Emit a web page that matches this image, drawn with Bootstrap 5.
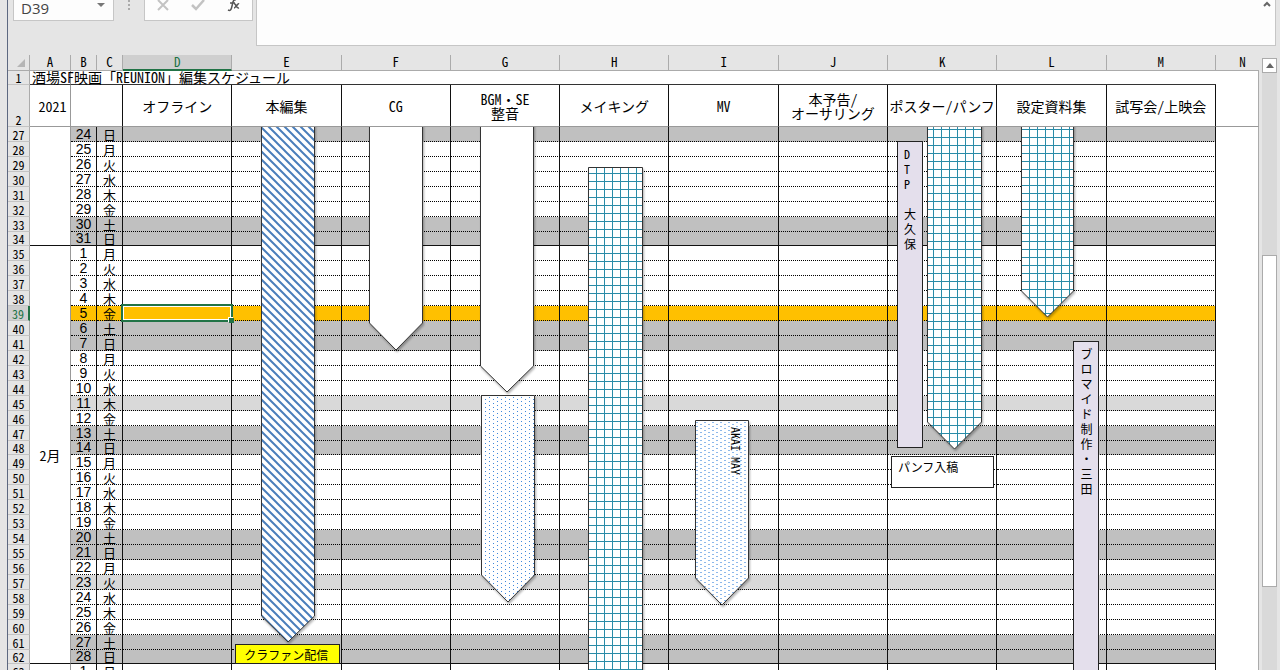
<!DOCTYPE html>
<html lang="ja">
<head>
<meta charset="utf-8">
<meta name="viewport" content="width=device-width, initial-scale=1">
<title>編集スケジュール</title>
<link href="https://cdn.jsdelivr.net/npm/bootstrap@5.3.0/dist/css/bootstrap.min.css" rel="stylesheet">
<style>
  :root { --chrome: #e5e5e5; --rule: #ababab; --excel: #217346; }
  body { background: var(--chrome); font-family: "Noto Sans CJK JP", sans-serif; font-size: 14px; color: #000; }
  .app { border-left: 1px solid #5d6880; margin-left: 7px; }

  .formula-bar { height: 55px; }
  .fx-box { background: #fdfdfd; border: 1px solid #c6c6c6; border-top: 0; height: 21px; }
  .name-box { width: 101px; margin-left: 5px; }
  .name-box input { font: 15px/16px "Open Sans", sans-serif; color: #444; width: 70px; padding: 0 0 0 7px; height: 16px; }
  .name-box button, .fx-tools button { height: 14px; line-height: 1; }
  .fx-tools { width: 109px; margin-left: 13px; }
  .grip { width: 3px; margin-left: 14px; }
  .formula { height: 46px; margin: 0 4px 0 3px; }
  .formula textarea { resize: none; height: 40px; }

  .sheet-table { table-layout: fixed; width: 100%; border-collapse: separate; border-spacing: 0; background: #fff; }
  .sheet-table th, .sheet-table td { padding: 0; font-weight: 400; text-align: center; vertical-align: middle; line-height: 14px; white-space: nowrap; }
  .c-num { width: 22px; } .c-a { width: 41px; } .c-day { width: 26px; } .c-n { width: 43px; }

  .half, .sheet-table .letters th, .sheet-table .rownum, .heads .frozen, .day .month { font-feature-settings: "hwid"; }
  .half { line-height: 0; }

  .sheet-table .letters th { height: 16px; background: var(--chrome); border-bottom: 1px solid var(--rule); border-right: 1px solid var(--rule); font-size: 13px; line-height: 14px; vertical-align: top; }
  .sheet-table .letters .picked { background: #cfcfcf; color: var(--excel); border-bottom: 2px solid var(--excel); }
  .sheet-table .letters th:last-child { padding-left: 10px; }
  .sheet-table .rownum { background: var(--chrome); border-right: 1px solid var(--rule); border-bottom: 1px solid #c4c4c4; font-size: 12px; line-height: 12px; vertical-align: bottom; }
  .sheet-table .rownum.picked { background: #cfcfcf; color: var(--excel); border-right: 2px solid var(--excel); }

  .sheet-table .title-row td { height: 14px; border-bottom: 1px solid #333; line-height: 13px; }
  .sheet-table .title-row .title-cell { text-align: left; padding-left: 2px; border-right: 1px solid #999; }
  .title-cell span { position: relative; }
  .heads th { height: 42px; border-right: 1px solid #111; border-bottom: 1px solid #999; }
  .heads .frozen { border-right-color: #999; }
  .sheet-table .heads .frozen { padding-left: 5px; }
  .heads .none { border-right: 0; }
  .sheet-table .title-row .blank { border: 0; border-right: 1px solid var(--rule); }
  .heads .blank { border-right-color: var(--rule); }

  .day td { height: 15px; border-bottom: 1px dotted #000; border-right: 1px solid #111; }
  .sheet-table .day.snug td { height: 14px; line-height: 13px; }
  .day.last td { border-bottom: 1px solid #111; }
  .day .month { border-right: 1px solid #999; border-bottom: 1px solid #111; background: #fff; }
  .day .date { font-family: "Liberation Sans", sans-serif; }
  .day .weekday { font-size: 13px; line-height: 13px; }
  .weekend td { background: #c0c0c0; } .holiday td { background: #d9d9d9; } .today td { background: #ffc000; }
  .day td.blank { background: #fff; border: 0; border-right: 1px solid var(--rule); }
  .active-cell { position: relative; }
  .active-cell i { position: absolute; inset: -2px; border: 2px solid var(--excel); box-shadow: inset 0 0 0 1px #fff; }
  .active-cell i::after { content: ""; position: absolute; right: -3px; bottom: -3px; width: 5px; height: 5px; background: var(--excel); box-shadow: -1px -1px 0 #fff; }

  /* drawing layer above the day rows; one track per task column */
  .shapes { position: absolute; top: 72px; bottom: 0; left: 115px; right: 43px; display: grid; grid-template-columns: repeat(10, 1fr); overflow: hidden; pointer-events: none; }
  .shapes > div { position: relative; }
  .shapes svg, .note { position: absolute; }
  .shapes svg { overflow: visible; filter: drop-shadow(1px 2px 1px rgba(0,0,0,.3)); }
  .shapes .outline { stroke: #333; stroke-width: 1; }
  .note { border: 1px solid #222; font-size: 12px; line-height: 15px; }
  .lilac { background: #e4dfec; width: 26px; padding: 4px 0 0 6px; }
  .akai { position: absolute; writing-mode: vertical-rl; font-size: 12px; line-height: 12px; }

  .scroll-col { width: 21px; padding: 3px 3px 0; }
  .scroll-col button { height: 15px; border: 1px solid var(--rule); background: #fff; }
  .track { background: #d9d9d9; }
  .thumb { margin-top: 182px; height: 332px; background: #fff; border: 1px solid var(--rule); }
</style>
</head>
<body class="overflow-hidden">
<div class="app vh-100 d-flex flex-column overflow-hidden">
  <header class="formula-bar d-flex align-items-start flex-shrink-0">
    <div class="fx-box name-box d-flex align-items-start">
      <input class="border-0 bg-transparent" type="text" value="D39" aria-label="名前ボックス">
      <button class="border-0 bg-transparent p-0 ms-auto me-2 d-flex align-items-start" aria-label="名前の一覧"><svg width="9" height="8"><path d="M1 3h8L5 7z" fill="#777"/></svg></button>
    </div>
    <svg class="grip" height="12" viewBox="0 0 3 12"><path d="M0 0h2v2H0zM0 4h2v2H0zM0 8h2v2H0z" fill="#aaa"/></svg>
    <div class="fx-box fx-tools d-flex justify-content-around">
      <button class="border-0 bg-transparent p-0 d-flex" aria-label="キャンセル"><svg width="14" height="12"><path d="M2 0l10 10M12 0L2 10" stroke="#c3c3c3" stroke-width="2"/></svg></button>
      <button class="border-0 bg-transparent p-0 d-flex" aria-label="入力"><svg width="14" height="12"><path d="M1 5l4 4L13 0" fill="none" stroke="#c3c3c3" stroke-width="2.500"/></svg></button>
      <button class="border-0 bg-transparent p-0 d-flex" aria-label="関数の挿入"><svg width="14" height="14"><path d="M9 0C7 -1 6 1 5.500 4L4.500 8C4 10 3 11 1 10M3 3h5M7 4c2-1 2 5 5 4M12 4c-1-1-4 4-5 4" fill="none" stroke="#555" stroke-width="1.500"/></svg></button>
    </div>
    <div class="fx-box formula flex-fill d-flex">
      <textarea class="border-0 bg-transparent flex-fill" aria-label="数式バー"></textarea>
      <button class="border-0 bg-transparent p-0 me-1 d-flex align-items-start" aria-label="数式バーの折りたたみ"><svg width="8" height="9"><path d="M1 6l3-3 3 3" fill="none" stroke="#666" stroke-width="2"/></svg></button>
    </div>
  </header>

  <main class="d-flex flex-fill overflow-hidden">
    <div class="flex-fill position-relative overflow-hidden">
      <table class="sheet-table">
        <colgroup><col class="c-num"><col class="c-a"><col class="c-day"><col class="c-day"><col><col><col><col><col><col><col><col><col><col><col class="c-n"></colgroup>
        <thead>
          <tr class="letters">
            <th><svg class="d-block ms-auto me-1 mt-1" width="8" height="8"><path d="M8 0v8H0z" fill="#b5b5b5"/></svg></th>
            <th>A</th><th>B</th><th>C</th><th class="picked">D</th><th>E</th><th>F</th><th>G</th><th>H</th><th>I</th><th>J</th><th>K</th><th>L</th><th>M</th><th class="border-end-0">N</th>
          </tr>
          <tr class="title-row">
            <th class="rownum">1</th>
            <td class="title-cell"><span>酒場<span class="half">SF</span>映画「<span class="half">REUNION</span>」編集スケジュール</span></td>
            <td colspan="12"></td><td class="blank"></td>
          </tr>
          <tr class="heads">
            <th class="rownum">2</th><th class="frozen">2021</th><th class="none"></th><th></th>
            <th>オフライン</th><th>本編集</th><th><span class="half">CG</span></th><th><span class="half">BGM</span>・<span class="half">SE</span><br>整音</th><th>メイキング</th><th><span class="half">MV</span></th><th>本予告<span class="half">/</span><br>オーサリング</th><th>ポスター<span class="half">/</span>パンフ</th><th>設定資料集</th><th>試写会<span class="half">/</span>上映会</th><th class="blank"></th>
          </tr>
        </thead>
        <tbody id="days"></tbody>
      </table>

      <div class="shapes">
        <div></div>
        <div>
          <svg style="left:29px;top:0" width="54" height="516"><defs><pattern id="stripe" width="8" height="8" patternUnits="userSpaceOnUse"><rect width="8" height="8" fill="#fff"/><path d="M-2 -2L10 10M-2 6L2 10M6 -2L10 2" stroke="#4a7ebb" stroke-width="2"/></pattern></defs><path class="outline" fill="url(#stripe)" d="M.5 -4H53.500V489L27 515L.5 489z"/></svg>
          <div class="note" style="left:3px;top:517px;width:105px;height:20px;padding-left:8px;background:#ff0;line-height:20px">クラファン配信</div>
        </div>
        <div><svg style="left:27px;top:0" width="54" height="224"><path class="outline" fill="#fff" d="M.5 -4H53.500V196L27 223L.5 196z"/></svg></div>
        <div>
          <svg style="left:29px;top:0" width="54" height="266"><path class="outline" fill="#fff" d="M.5 -4H53.500V239L27 265L.5 239z"/></svg>
          <svg style="left:30px;top:268px" width="54" height="208"><defs><pattern id="dots" width="8" height="4" patternUnits="userSpaceOnUse"><rect width="8" height="4" fill="#fff"/><path d="M4 0h1v1h-1zM0 2h1v1h-1z" fill="#3f88dc"/></pattern></defs><path class="outline" fill="url(#dots)" d="M.5 .5H53.500V180L27 207L.5 180z"/></svg>
        </div>
        <div><svg style="left:28px;top:40px" width="55" height="600"><defs><pattern id="gridH" width="8" height="8" y="6" patternUnits="userSpaceOnUse"><rect width="8" height="8" fill="#fff"/><path d="M0 .5H8M.5 0V8" stroke="#2a8ca8"/></pattern></defs><path class="outline" fill="url(#gridH)" d="M.5 .5H54.500V620H.5z"/></svg></div>
        <div>
          <svg style="left:25px;top:293px" width="54" height="186"><defs><pattern id="dashes" width="8" height="4" patternUnits="userSpaceOnUse"><rect width="8" height="4" fill="#fff"/><path d="M5 0h2v1h-2zM1 2h2v1h-2z" fill="#8db8ea"/></pattern></defs><path class="outline" fill="url(#dashes)" d="M.5 .5H53.500V158L27 185L.5 158z"/></svg>
          <div class="akai half" style="left:60px;top:300px;line-height:12px">AKAI MAY</div>
        </div>
        <div></div>
        <div>
          <div class="note lilac" style="left:9px;top:14px;height:307px"><span class="half">D<br>T<br>P</span><br><br>大<br>久<br>保</div>
          <svg style="left:39px;top:0" width="55" height="323"><defs><pattern id="gridK" width="8" height="8" x="6" y="2" patternUnits="userSpaceOnUse"><rect width="8" height="8" fill="#fff"/><path d="M0 .5H8M.5 0V8" stroke="#2a8ca8"/></pattern></defs><path class="outline" fill="url(#gridK)" d="M.5 -4H54.500V295L27.500 322L.5 295z"/></svg>
          <div class="note bg-white" style="left:3px;top:329px;width:103px;height:32px;padding:2px 6px">パンフ入稿</div>
        </div>
        <div>
          <svg style="left:24px;top:0" width="53" height="191"><defs><pattern id="gridL" width="8" height="8" y="2" patternUnits="userSpaceOnUse"><rect width="8" height="8" fill="#fff"/><path d="M0 .5H8M.5 0V8" stroke="#2a8ca8"/></pattern></defs><path class="outline" fill="url(#gridL)" d="M.5 -4H52.500V164L26.500 190L.5 164z"/></svg>
          <div class="note lilac" style="left:76px;top:214px;height:600px">ブ<br>ロ<br>マ<br>イ<br>ド<br>制<br>作<br>・<br>三<br>田</div>
        </div>
        <div></div>
      </div>
    </div>

    <div class="scroll-col d-flex flex-column flex-shrink-0">
      <button class="p-0 d-flex align-items-center justify-content-center" aria-label="上へスクロール"><svg width="8" height="5"><path d="M4 0l4 5H0z" fill="#666"/></svg></button>
      <div class="track flex-fill"><div class="thumb"></div></div>
    </div>
  </main>
</div>

<script>
  // January 24 (row 27, Sunday) onward
  const week = "日月火水木金土";
  const holidays = ["2-11", "2-23"], today = "2-5";
  const monthRows = { 27: ["", 8], 35: ["2月", 28], 63: ["", 1] };
  const snug = [34, 48, 62], monthEnds = [34, 62];
  const first = new Date(2021, 0, 24);
  let html = "";
  for (let r = 27; r < 64; r++) {
    const d = new Date(first.getFullYear(), 0, first.getDate() + r - 27);
    const key = (d.getMonth() + 1) + "-" + d.getDate(), w = d.getDay();
    const cls = ["day"];
    if (key === today) cls.push("today");
    else if (w === 0 || w === 6) cls.push("weekend");
    else if (holidays.includes(key)) cls.push("holiday");
    if (snug.includes(r)) cls.push("snug");
    if (monthEnds.includes(r)) cls.push("last");
    html += `<tr class="${cls.join(" ")}"><th class="rownum${key === today ? " picked" : ""}">${r}</th>`;
    if (monthRows[r]) html += `<td class="month" rowspan="${monthRows[r][1]}">${monthRows[r][0]}</td>`;
    html += `<td class="date">${d.getDate()}</td><td class="weekday">${week[w]}</td>`;
    html += key === today ? '<td class="active-cell"><i></i></td>' : "<td></td>";
    html += "<td></td>".repeat(9) + '<td class="blank"></td></tr>';
  }
  document.getElementById("days").innerHTML = html;
</script>
<script src="https://cdn.jsdelivr.net/npm/bootstrap@5.3.0/dist/js/bootstrap.bundle.min.js"></script>
</body>
</html>
